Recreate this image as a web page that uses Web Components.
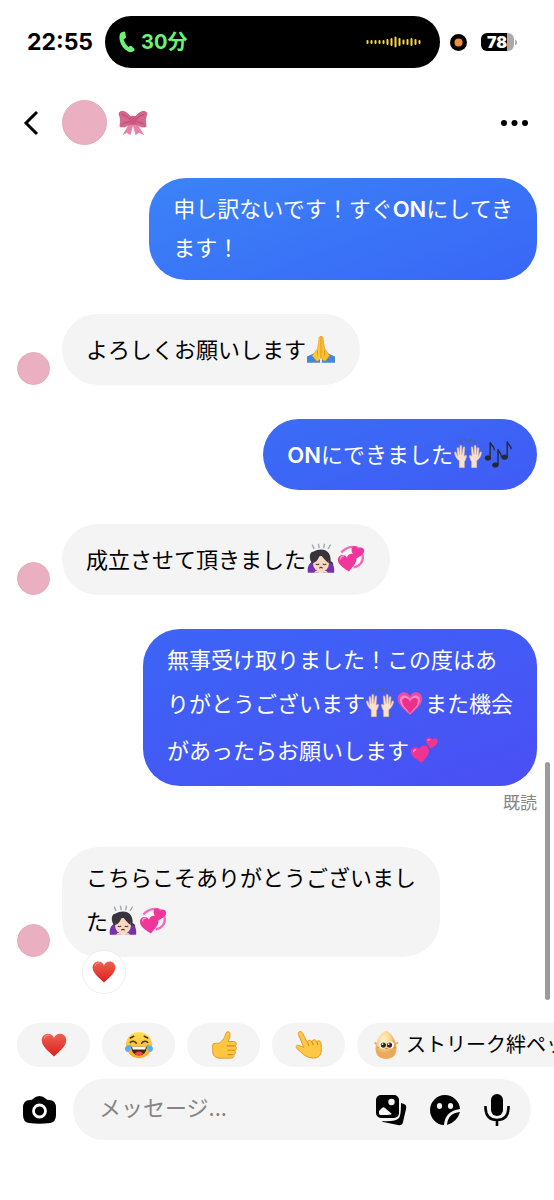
<!DOCTYPE html>
<html lang="ja">
<head>
<meta charset="utf-8">
<meta name="viewport" content="width=device-width, initial-scale=1">
<title>メッセージ</title>
<style>
body{margin:0;background:#fff;color:#000;font-family:"Noto Sans CJK JP","Noto Sans",sans-serif}
</style>
</head>
<body>
<chat-app></chat-app>
<script>
const define = (name, html, setup) => customElements.define(name, class extends HTMLElement {
  constructor() {
    super();
    const t = document.createElement('template');
    t.innerHTML = html;
    this.attachShadow({mode: 'open'}).append(t.content.cloneNode(true));
  }
  connectedCallback() { if (setup) setup(this, this.shadowRoot); }
});

const heart = 'M16 29C11 24 2 18 2 10.500C2 5.500 5.500 3 9 3C12.500 3 15 5 16 8C17 5 19.500 3 23 3C26.500 3 30 5.500 30 10.500C30 18 21 24 16 29Z';
const hand = '<path d="M6 30V22C3 20 1 17 0.500 13C0.500 11.500 2 11.500 2.500 13L4 17L3.500 8C3.500 6.500 5.200 6.500 5.500 8L6.300 15L6.800 5.500C7 4 8.800 4 8.800 5.600L9 15L10.500 7C11 5.500 12.500 6 12.300 7.500L11.500 17C13 15.500 14.500 15.500 14.500 17C13.500 20 13 22 12 23V30Z" fill="#fbe0cc" stroke="#d9ae96" stroke-width=".6"/>';
const emoji = {
  heart: `<defs><linearGradient id="g" x2="0" y2="1"><stop stop-color="#f0604f"/><stop offset="1" stop-color="#d8201f"/></linearGradient></defs><path d="${heart}" fill="url(#g)"/><path d="M5 9C5 6 8 4 11 5" stroke="#fa9c8d" stroke-width="1.400" fill="none" opacity=".7"/>`,
  growing: `<path d="${heart}" fill="#f04aa0"/><path d="M16 28C11 23 4.500 17.500 4.500 12C4.500 5.500 13 5 16 11C19 5 27.500 5.500 27.500 12C27.500 17.500 21 23 16 28Z" fill="#ff86c6"/><path d="M16 27C12 22 7 18 7 13C7 8.500 14 8.500 16 14C18 8.500 25 8.500 25 13C25 18 20 22 16 27Z" fill="#ed2f8c"/>`,
  revolving: `<path d="M5 8C11 1 20 0 26 4M29 10C31 18 26 24 19 25" fill="none" stroke="#f56bbb" stroke-width="2.800"/><g fill="#f0369b"><path transform="translate(0 8) rotate(-8 11 11) scale(.76)" d="${heart}"/><path transform="translate(15 0) rotate(12 8 8) scale(.52)" d="${heart}"/></g><path d="M4 16Q4 12 8 12" stroke="#ff91ce" stroke-width="1.500" fill="none"/>`,
  two: `<g fill="#f0348f"><path transform="translate(0 9) rotate(-9 11 11) scale(.74)" d="${heart}"/><path transform="translate(17 0) rotate(9 7 7) scale(.48)" d="${heart}"/></g><path d="M4 18Q4 15 7 15M20 5Q21 3 23 4" stroke="#ff8ccc" stroke-width="1.200" fill="none"/>`,
  hands: `<g transform="translate(0 1)">${hand}</g><g transform="translate(32 1) scale(-1 1)">${hand}</g><path d="M7 -1L9 3M13 -2L14 2M19 -2L18 2M25 -1L23 3" stroke="#53647e" stroke-width="1.300"/>`,
  notes: '<g fill="#242a32" stroke="#242a32"><ellipse cx="4.500" cy="20" rx="3.300" ry="2.500"/><path d="M7 20V2C8 6 12 6 12 11" fill="none" stroke-width="1.600"/><ellipse cx="13" cy="28" rx="3.300" ry="2.500"/><path d="M16 28V10C17 14 20 14 20 19" fill="none" stroke-width="1.600"/><ellipse cx="23.500" cy="19" rx="3.300" ry="2.500"/><path d="M26.500 19V1C27 5 31 5 31 10" fill="none" stroke-width="1.600"/></g>',
  pray: '<path d="M0 31V24L9 20L15 28V31ZM32 31V24L23 20L17 28V31Z" fill="#4489d7"/><path d="M16 1C13.500 1 13.500 3 13.500 5L12 15L6 23L11 29C14 29 16 26 16 23Z" fill="#ffc83a" stroke="#e99b20" stroke-width=".7"/><path d="M16 1C18.500 1 18.500 3 18.500 5L20 15L26 23L21 29C18 29 16 26 16 23Z" fill="#ffbd32" stroke="#d68c18" stroke-width=".7"/><path d="M12 17V23M20 17V23" stroke="#d68c18" stroke-width=".8"/>',
  bow: '<path d="M5 19C2 14 3 7 7 7C18 1 28 6 27 18C31 19 31 24 27 25H5Q1 22 5 19Z" fill="#38343b"/><path d="M1 31C0 22 4 18 8 21L14 31ZM31 31C32 22 28 18 24 21L18 31Z" fill="#7532ad"/><ellipse cx="16" cy="21" rx="9" ry="9" fill="#f9d8c3"/><path d="M7 20Q13 18 15 9Q20 17 25 20L23 11L16 7L8 12Z" fill="#38343b"/><path d="M10 21Q12 23 14 21M18 21Q20 23 22 21M14 26Q16 24 18 26" fill="none" stroke="#54372f" stroke-width="1.200"/><path d="M8 31Q10 27 15 30H17Q22 27 24 31Z" fill="#f9d8c3"/><path d="M6 -1L8 4M13 -2L14 3M20 -2L19 3M27 -1L24 4" stroke="#a4a9ae" stroke-width="1.600"/>',
  joy: '<defs><linearGradient id="j" x2="0" y2="1"><stop stop-color="#ffe052"/><stop offset="1" stop-color="#f7a928"/></linearGradient></defs><circle cx="16" cy="16" r="15" fill="url(#j)"/><path d="M7 18H25Q24 28 16 28Q8 28 7 18Z" fill="#4c241b"/><path d="M8 18H24L23 21H9Z" fill="#fff"/><path d="M11 26Q16 21 21 26Q16 30 11 26Z" fill="#ef4d43"/><path d="M6 13Q10 10 13 14M19 14Q22 10 26 13M6 8L10 6M22 6L26 8" fill="none" stroke="#56331c" stroke-width="1.700" stroke-linecap="round"/><path d="M7 16C0 16 -1 20 1 23C5 25 7 22 7 16ZM25 16C32 16 33 20 31 23C27 25 25 22 25 16Z" fill="#53aef3"/>',
  thumb: '<path d="M3 16Q3 14 6 14H10C15 11 17 7 18 3Q19 0 21.500 1C24 2 23 8 20.500 12H27C31 12 31 17 28 17C31 18 31 22 28 22C30 24 29 27 27 27C28 30 26 31 23 31H10Q3 30 3 23Z" fill="#ffc642" stroke="#dc9320"/><path d="M19 17H28M20 22H28M20 27H26" stroke="#d68d1c" stroke-width="1.200"/>',
  point: '<path d="M10 19L4 4C3 0 7 -1 9 3L14 13C15 10 18 10 19 12C21 9 24 10 25 12C28 10 30 12 30 16V23C30 28 26 31 21 31Q15 31 10 27L2 20C0 17 3 15 6 17Z" fill="#ffc744" stroke="#db941f"/><path d="M14 13L16 17M19 12L21 16M25 12L26 16" stroke="#d38a1d" stroke-width="1.200"/>',
  egg: '<defs><radialGradient id="e" cx=".4" cy=".3"><stop stop-color="#fff0c9"/><stop offset=".6" stop-color="#fbd693"/><stop offset="1" stop-color="#e9a95e"/></radialGradient></defs><path d="M16 0C21 0 28 11 28 20C28 28 23 32 16 32S4 28 4 20C4 11 11 0 16 0Z" fill="url(#e)"/><circle cx="12" cy="16" r="4" fill="#fff"/><circle cx="21" cy="16" r="4" fill="#fff"/><circle cx="13" cy="16" r="3" fill="#37251a"/><circle cx="20" cy="16" r="3" fill="#37251a"/><circle cx="12" cy="15" r="1" fill="#fff"/><circle cx="19" cy="15" r="1" fill="#fff"/><path d="M15 20H18M6 19H8M25 19H27" stroke="#d57c4f"/><path d="M5 15L3 13M27 15L30 13" stroke="#e9a95e" stroke-width="2"/>',
  ribbon: '<path d="M12 16L4 30L9 27L13 30L16 19L19 30L23 27L29 30L20 16Z" fill="#e782a8"/><path d="M14 10C8 1 0 1 0 6C2 10 2 14 1 20C5 22 11 19 14 16ZM18 10C24 1 32 1 32 6C30 10 30 14 31 20C27 22 21 19 18 16Z" fill="#d9668f" stroke="#b34d74" stroke-width=".7"/><path d="M3 6Q8 7 13 12M29 6Q24 7 19 12M4 17L12 14M28 17L20 14" stroke="#ad456d" fill="none"/><rect x="12" y="8" width="8" height="10" rx="3" fill="#cd557f"/>'
};
define('emoji-icon', `<style>
:host{display:inline-block;vertical-align:-13px;box-sizing:border-box;padding-top:4px;width:30px;height:47px}
:host([plain]){display:block;width:28px;height:28px;padding:0}
svg{display:block;width:28px;height:100%;margin:0 auto;overflow:visible}
:host([size=small]){width:26px;height:26px}
:host([size=small]) svg{width:26px}
</style><svg role="img" viewBox="0 0 32 32"></svg>`, (el, root) => {
  const svg = root.querySelector('svg');
  svg.setAttribute('aria-label', el.getAttribute('name'));
  svg.innerHTML = emoji[el.getAttribute('name')];
});

define('user-avatar', `<style>:host{display:block;flex:none;width:33px;height:33px;box-sizing:border-box;border-radius:50%;background:#eab0c1;border:1px solid #e3abbb}:host([large]){width:45px;height:45px}</style>`);

define('status-bar', `<style>
:host{display:flex;align-items:center;padding:16px 37px 0 27px;font-family:Inter,"Noto Sans CJK JP",sans-serif;font-weight:700}
time{width:78px;font-size:23px;line-height:28px}
.island{flex:1;height:52px;box-sizing:border-box;border-radius:26px;background:#000;color:#6df276;display:flex;align-items:center;padding:0 18px 0 14px;font-size:20px;gap:6px}
.island span{flex:1;line-height:24px}
.record{width:17px;height:17px;margin:0 14px 0 10px}
.battery{display:flex;align-items:center;color:#fff;font-size:16px}
.battery b{width:33px;height:18px;border-radius:6px;background:linear-gradient(90deg,#000 80%,#aaa 80%);line-height:18px;text-align:center;box-sizing:border-box;padding-right:1px}
.battery i{width:2px;height:5px;margin-left:1px;border-radius:0 2px 2px 0;background:#aaa}
svg{display:block}
</style><time>22:55</time><div class="island">
<svg width="16" height="22" viewBox="0 0 16 22"><path d="M2 1.500L5 .5Q6 .5 6.200 1.500L7 6Q7 7 6 7.500L4.500 8.500Q6 13 9.500 16L11 15Q12 14.500 12.800 15.200L15.500 18Q16 19 15 20Q12 22 9 20.500C3 17 0 11 .5 5Q.7 2.500 2 1.500Z" fill="#6df276"/></svg><span>30分</span>
<svg width="56" height="12" viewBox="0 0 56 12"><path d="M1.500 5V7M5.500 5V7M9.500 5V7M13.500 5V7M17.500 5V7M21.500 4V8M25.500 3V9M29.500 1.500V10.500M33.500 3V9M37.500 4.500V7.500M41.500 4V8M45.500 3V9M49.500 4V8M53.500 5V7" stroke="#f8d44b" stroke-width="2" stroke-linecap="round"/></svg></div>
<svg class="record" viewBox="0 0 17 17"><circle cx="8.500" cy="8.500" r="8.500"/><circle cx="8.500" cy="8.500" r="4" fill="#f78d32"/></svg><div class="battery"><b>78</b><i></i></div>`);

define('chat-header', `<style>
:host{display:flex;align-items:center;padding:32px 26px 0 22px}
button{border:0;padding:0;background:none;color:#000;display:block}svg{display:block}
.back{width:40px}user-avatar{margin-right:12px}.more{margin-left:auto}
</style><button class="back" aria-label="戻る"><svg width="18" height="26" viewBox="0 0 18 26"><path d="M15 2L4 13L15 24" fill="none" stroke="#000" stroke-width="3"/></svg></button><user-avatar large></user-avatar><emoji-icon plain name="ribbon"></emoji-icon><button class="more" aria-label="その他"><svg width="28" height="8" viewBox="0 0 28 8"><circle cx="4" cy="4" r="3"/><circle cx="14.500" cy="4" r="3"/><circle cx="25" cy="4" r="3"/></svg></button>`);

define('chat-message', `<style>
:host{display:flex;flex-direction:column;align-items:flex-start}
.row{display:flex;align-items:flex-end;gap:12px}
.bubble{padding:10px 24px 14px;border-radius:37px;background:#f4f4f4;font-size:22px;line-height:39px;position:relative}
:host([mine]){align-items:flex-end}
:host([mine]) user-avatar{display:none}
:host([mine]) .bubble{color:#fff;background:linear-gradient(160deg,var(--from),var(--to))}
::slotted(b){font-family:Inter,sans-serif;font-weight:600;line-height:24px}
::slotted([slot=status]){font-size:17px;line-height:20px;margin:6px 0 1px;color:#858585}
::slotted([slot=reaction]){position:absolute;left:20px;bottom:-37px}
</style><div class="row"><user-avatar></user-avatar><div class="bubble"><slot></slot><slot name="reaction"></slot></div></div><slot name="status"></slot>`);

define('reaction-badge', `<style>:host{display:flex;width:44px;height:44px;box-sizing:border-box;border:1px solid #eee;border-radius:50%;background:#fff;align-items:center;justify-content:center}</style><slot></slot>`);

define('message-list', `<style>
:host{display:flex;flex-direction:column;flex:1;gap:34px;padding:33px 17px 60px;position:relative}
.thumb{position:absolute;right:4px;bottom:23px;width:5px;height:238px;border-radius:3px;background:#9b9b9b}
</style><slot></slot><div class="thumb"></div>`);

define('quick-replies', `<style>
:host{display:flex;gap:12px;padding-left:17px;overflow:hidden}
button{flex:none;min-width:73px;height:44px;padding:0 15px;border:0;border-radius:22px;background:#f4f4f4;color:#000;display:flex;align-items:center;justify-content:center;gap:6px;font:400 20px "Noto Sans CJK JP",sans-serif;white-space:nowrap}
span{line-height:24px;padding-bottom:2px}
</style><button aria-label="ハート"><emoji-icon plain name="heart"></emoji-icon></button><button aria-label="笑い"><emoji-icon plain name="joy"></emoji-icon></button><button aria-label="いいね"><emoji-icon plain name="thumb"></emoji-icon></button><button aria-label="つつく"><emoji-icon plain name="point"></emoji-icon></button><button><emoji-icon plain name="egg"></emoji-icon><span>ストリーク絆ペット</span></button>`);

define('message-composer', `<style>
:host{display:flex;align-items:center;padding:12px 23px 60px;gap:17px}
form{flex:1;min-width:0;display:flex;align-items:center;gap:22px;height:61px;border-radius:31px;background:#f4f4f4;padding:0 20px 0 26px}
input{flex:1;min-width:0;border:0;padding:0 0 8px;background:none;outline:0;height:40px;font:400 22px "Noto Sans CJK JP",sans-serif;color:#000}
input::placeholder{color:#858585;opacity:1}
button{flex:none;border:0;padding:0;background:none}svg{display:block}
</style><button aria-label="カメラ"><svg width="33" height="28" viewBox="0 0 33 28"><path d="M7 4Q9 4 10.500 2.500Q12.500 0 16.500 0Q20.500 0 22.500 2.500Q24 4 26 4Q33 4 33 12V19Q33 26 27 27Q16.500 28.500 6 27Q0 26 0 19V12Q0 4 7 4Z"/><circle cx="16.500" cy="15" r="6" fill="none" stroke="#fff" stroke-width="2.800"/></svg></button>
<form><input type="text" aria-label="メッセージ" placeholder="メッセージ...">
<button type="button" aria-label="写真"><svg width="32" height="32" viewBox="0 0 32 32"><path d="M7 27Q20 28 24 24Q26 22 26 9L29 10Q32 11 31 15L28 28Q27 32 23 31L8 28Z"/><rect x="1" y="1" width="23" height="23" rx="5"/><circle cx="16.500" cy="8" r="3.200" fill="#f4f4f4"/><path d="M4 20V17L7 14Q8.500 12.500 10 14L17 20Q15 21 12 21H6Q4 21 4 20Z" fill="#f4f4f4"/></svg></button>
<button type="button" aria-label="スタンプ"><svg width="32" height="32" viewBox="0 0 32 32"><path d="M31 15A15 15 0 1 0 15 31Q16 17 31 15Z"/><path d="M18 31Q19 19 31 18Q28 28 18 31Z"/><ellipse cx="10.500" cy="12" rx="2.600" ry="3" fill="#f4f4f4"/><ellipse cx="21.500" cy="12" rx="2.600" ry="3" fill="#f4f4f4"/></svg></button>
<button type="button" aria-label="音声"><svg width="28" height="32" viewBox="0 0 28 32"><rect x="8" y="0" width="12" height="22" rx="6"/><path d="M2.500 12V14Q3 26 14 26Q25 26 25.500 14V12M14 26V32" fill="none" stroke="#000" stroke-width="2.600"/></svg></button></form>`);

define('chat-app', `<style>
:host{display:flex;flex-direction:column;min-height:100vh;overflow:hidden}
</style><status-bar></status-bar><chat-header></chat-header><message-list>
<chat-message mine style="--from:#3b83f7;--to:#3966f6">申し訳ないです！すぐ<b>ON</b>にしてき<br>ます！</chat-message>
<chat-message>よろしくお願いします<emoji-icon name="pray"></emoji-icon></chat-message>
<chat-message mine style="--from:#3a6df6;--to:#405bf5"><b>ON</b>にできました<emoji-icon name="hands"></emoji-icon><emoji-icon name="notes"></emoji-icon></chat-message>
<chat-message>成立させて頂きました<emoji-icon name="bow"></emoji-icon><emoji-icon name="revolving"></emoji-icon></chat-message>
<chat-message mine style="--from:#3b65f6;--to:#4b4ff4">無事受け取りました！この度はあ<br>りがとうございます<emoji-icon name="hands"></emoji-icon><emoji-icon name="growing"></emoji-icon>また機会<br>があったらお願いします<emoji-icon name="two"></emoji-icon><span slot="status">既読</span></chat-message>
<chat-message>こちらこそありがとうございまし<br>た<emoji-icon name="bow"></emoji-icon><emoji-icon name="revolving"></emoji-icon><reaction-badge slot="reaction"><emoji-icon plain size="small" name="heart"></emoji-icon></reaction-badge></chat-message>
</message-list><quick-replies></quick-replies><message-composer></message-composer>`);
</script>
</body>
</html>
